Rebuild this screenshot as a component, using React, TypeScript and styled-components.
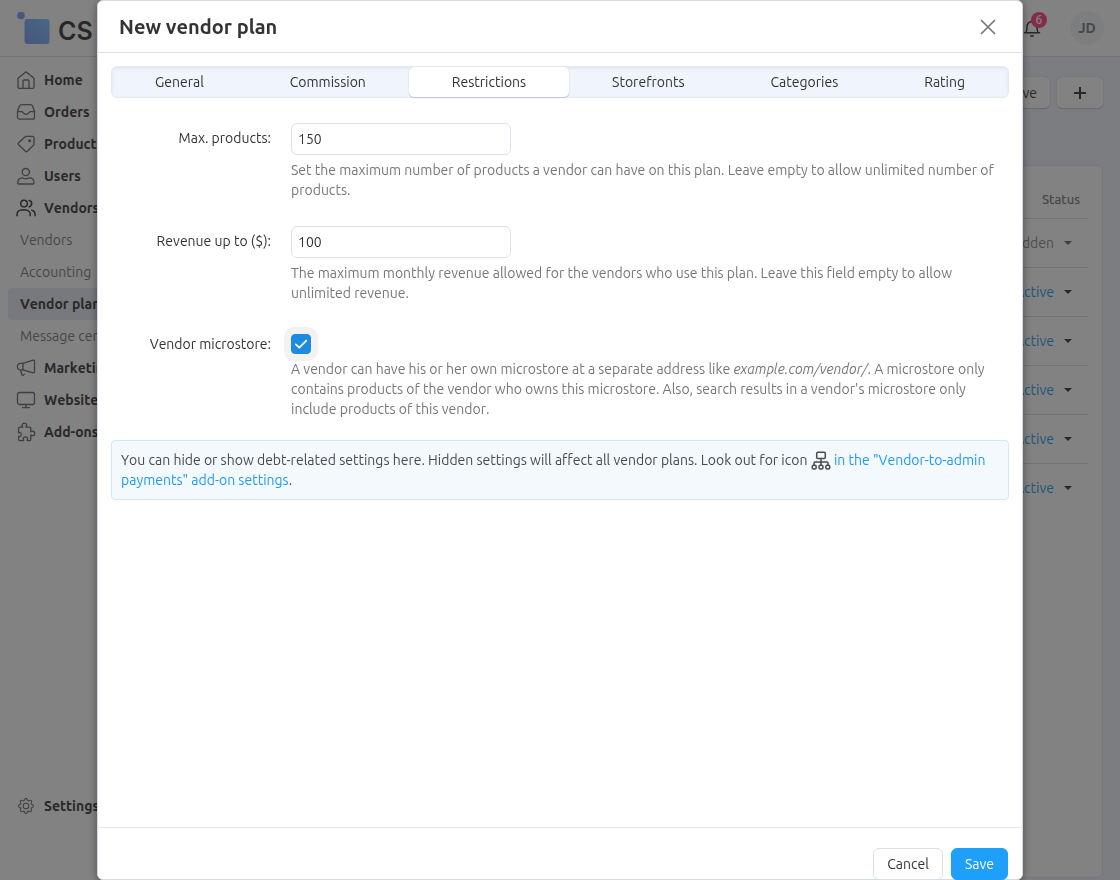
import React, { useState } from 'react';
import styled, { createGlobalStyle, css } from 'styled-components';
import { BsGear } from 'react-icons/bs';

const GlobalStyle = createGlobalStyle`
  *, *::before, *::after { box-sizing: border-box; }
  body {
    margin: 0;
    background: #f0f4fb;
    color: #333;
    font-family: Ubuntu, "Noto Sans", sans-serif;
    font-size: 14px;
    font-kerning: none;
    line-height: 20px;
  }
  button, input { font: inherit; font-kerning: inherit; color: inherit; }
`;

const Page = styled.div`
  display: flex;
  flex-direction: column;
  height: 100vh;
  overflow: hidden;
`;

const TopBar = styled.header`
  display: flex;
  align-items: center;
  justify-content: space-between;
  height: 57px;
  flex: none;
  padding: 0 16px;
  background: #fff;
  border-bottom: 1px solid #dde2ea;
`;

const Brand = styled.a`
  display: flex;
  align-items: flex-end;
  gap: 8px;
  color: #333;
  font: 600 25px/28px Inter, sans-serif;
  text-decoration: none;
`;

const TopActions = styled.div`
  display: flex;
  align-items: center;
  gap: 28px;
`;

const BellButton = styled.button`
  position: relative;
  display: flex;
  padding: 0;
  border: 0;
  background: none;
  color: #333;
`;

const Badge = styled.span`
  position: absolute;
  top: -6px;
  right: -5px;
  width: 16px;
  height: 16px;
  border-radius: 8px;
  background: #ff3d7f;
  color: #fff;
  font-size: 12px;
  font-weight: 500;
  line-height: 16px;
  text-align: center;
`;

const Avatar = styled.button`
  width: 34px;
  height: 34px;
  padding: 0;
  border: 0;
  border-radius: 50%;
  background: #f3f5f9;
  color: #777b82;
  font-weight: 600;
`;

const Workspace = styled.div`
  display: flex;
  flex: 1;
  min-height: 0;
`;

const Sidebar = styled.nav`
  display: flex;
  flex-direction: column;
  justify-content: space-between;
  width: 200px;
  padding: 7px 8px 58px;
  background: #fff;
`;

const NavList = styled.ul`
  margin: 0;
  padding: 0;
  list-style: none;
`;

const NavLink = styled.a<{ $dark?: boolean }>`
  display: flex;
  align-items: center;
  gap: 8px;
  height: 32px;
  padding: 0 8px;
  color: #333;
  font-weight: 700;
  text-decoration: none;
  svg { flex: none; color: ${(p) => (p.$dark ? '#333' : '#666')}; }
`;

const SubLink = styled.a<{ $active?: boolean }>`
  display: flex;
  align-items: center;
  height: 32px;
  padding: 0 12px;
  border-radius: 4px;
  color: #777;
  text-decoration: none;
  ${(p) =>
    p.$active &&
    css`
      background: #e6ebf5;
      color: #333;
      font-weight: 700;
    `}
`;

const Main = styled.main`
  display: flex;
  flex: 1;
  flex-direction: column;
  gap: 57px;
  padding: 20px 17px 2px;
`;

const ActionBar = styled.div`
  display: flex;
  justify-content: flex-end;
  gap: 7px;
`;

const PageButton = styled.button`
  display: flex;
  align-items: center;
  justify-content: center;
  min-width: 46px;
  height: 31px;
  padding: 0 13px;
  border: 0;
  border-radius: 5px;
  background: #fff;
  box-shadow: 0 0 1px #a5adba, 0 1px 1px #c0c7d2;
`;

const Card = styled.section`
  flex: 1;
  padding: 14px 14px 0;
  border: 1px solid #e4e8ef;
  border-radius: 6px;
  background: #fff;
`;

const PlanTable = styled.table`
  width: 100%;
  border-collapse: collapse;
`;

const HeadCell = styled.th`
  height: 38px;
  padding: 0 8px 0 0;
  border-bottom: 1px solid #dce0e5;
  color: #777;
  font-size: 13px;
  font-weight: 500;
  text-align: right;
`;

const StatusCell = styled.td`
  height: 49px;
  padding: 0 16px 0 0;
  border-bottom: 1px solid #dce0e5;
  text-align: right;
  tr:last-child & { border-bottom: 0; }
`;

const StatusButton = styled.button<{ $muted?: boolean }>`
  display: inline-flex;
  align-items: center;
  gap: 10px;
  padding: 0;
  border: 0;
  background: none;
  color: ${(p) => (p.$muted ? '#888' : '#1d9bee')};
  &::after {
    content: '';
    border: 4px solid transparent;
    border-top-color: ${(p) => (p.$muted ? '#666' : '#333')};
    border-bottom: 0;
  }
`;

const Backdrop = styled.div`
  position: fixed;
  inset: 0;
  display: flex;
  justify-content: center;
  background: rgba(32, 32, 32, 0.56);
`;

const Dialog = styled.div`
  display: flex;
  flex-direction: column;
  width: 926px;
  max-width: 100%;
  border: 1px solid #d5dae5;
  border-radius: 6px;
  background: #fff;
  box-shadow: 0 2px 8px rgba(0, 0, 0, 0.4);
`;

const DialogHeader = styled.header`
  display: flex;
  align-items: center;
  justify-content: space-between;
  height: 52px;
  flex: none;
  padding: 0 24px 0 21px;
  border-bottom: 1px solid #dddfea;
`;

const DialogTitle = styled.h1`
  margin: 0;
  font-size: 20px;
  font-weight: 700;
  line-height: 28px;
`;

const CloseButton = styled.button`
  display: flex;
  padding: 0;
  border: 0;
  background: none;
  color: #777;
`;

const DialogBody = styled.div`
  display: flex;
  flex: 1;
  flex-direction: column;
  min-height: 0;
  padding: 13px;
  overflow: auto;
`;

const TabList = styled.div`
  display: flex;
  flex: none;
  height: 32px;
  border: 1px solid #e8ebf1;
  border-radius: 6px;
  background: #f0f4fc;
  box-shadow: inset 0 1px 3px rgba(60, 70, 100, 0.1);
`;

const Tab = styled.button<{ $selected: boolean }>`
  flex: 1 1 auto;
  padding: 0;
  border: 0;
  border-radius: 5px;
  background: ${(p) => (p.$selected ? '#fff' : 'transparent')};
  box-shadow: ${(p) => (p.$selected ? '0 0 1px #b9c1d4, 0 1px 1px #bcc5da' : 'none')};
`;

const Form = styled.form`
  display: flex;
  flex-direction: column;
  gap: 26px;
  margin: 25px 0 21px;
`;

const Field = styled.div`
  display: grid;
  grid-template-columns: 160px 1fr;
  column-gap: 20px;
`;

const Label = styled.label`
  line-height: 30px;
  text-align: right;
`;

const TextInput = styled.input`
  display: block;
  width: 220px;
  max-width: 100%;
  height: 32px;
  padding: 0 6px;
  border: 1px solid #dde1ea;
  border-radius: 6px;
  background: #fff;
`;

const CheckBox = styled.input`
  appearance: none;
  display: block;
  width: 20px;
  height: 20px;
  margin: 0;
  border: 1px solid #c4cbd8;
  border-radius: 4px;
  background: #fff;
  box-shadow: 0 0 0 7px #f2f2f2;
  &:checked {
    border-color: #1b8ce0;
    background: #1b8ce0;
  }
`;

const CheckWrap = styled.span`
  position: relative;
  display: block;
  width: 20px;
  margin-top: 5px;
  svg {
    position: absolute;
    top: 0;
    left: 0;
    pointer-events: none;
  }
`;

const Help = styled.p`
  margin: 5px 0 0;
  color: #777;
`;

const Notice = styled.p`
  margin: 0;
  padding: 9px;
  border: 1px solid #cfe9f8;
  border-radius: 4px;
  background: #f4f9fe;
  color: #4a4a4a;
  svg { margin: -4px 0; vertical-align: middle; }
`;

const NoticeLink = styled.a`
  color: #1d9bee;
  text-decoration: none;
`;

const DialogFooter = styled.footer`
  display: flex;
  justify-content: flex-end;
  gap: 8px;
  flex: none;
  margin-bottom: -1px;
  padding: 20px 14px 0;
  border-top: 1px solid #e6e7ea;
`;

const DialogButton = styled.button<{ $primary?: boolean }>`
  height: 32px;
  padding: 0 13px;
  border: 1px solid ${(p) => (p.$primary ? '#1d9ffa' : '#dadfe8')};
  border-radius: 6px;
  background: ${(p) => (p.$primary ? '#1d9ffa' : '#fff')};
  color: ${(p) => (p.$primary ? '#fff' : '#333')};
`;

const Glyph = ({ children }: { children: React.ReactNode }) => (
  <svg width="20" height="20" viewBox="0 0 20 20" fill="none" stroke="currentColor" strokeWidth="1.3" strokeLinecap="round" strokeLinejoin="round" aria-hidden="true">
    {children}
  </svg>
);

const HomeIcon = () => (
  <Glyph>
    <path d="M2 8.300 10 1.800l8 6.500v8.600a1.500 1.500 0 0 1-1.500 1.500h-13A1.500 1.500 0 0 1 2 16.900z" />
    <path d="M7 18.200V11a1 1 0 0 1 1-1h4a1 1 0 0 1 1 1v7.200" />
  </Glyph>
);
const OrdersIcon = () => (
  <Glyph>
    <path d="M5.3 2.7h9.4c.8 0 1.5.5 1.8 1.2l2 5.4v5.9a2 2 0 0 1-2 2h-13a2 2 0 0 1-2-2V9.3l2-5.4c.3-.7 1-1.2 1.8-1.2z" />
    <path d="M1.6 9.7h4.1c1.3 0 1.4 2.7 4.3 2.7s3-2.7 4.3-2.7h4.1" />
  </Glyph>
);
const TagIcon = () => (
  <Glyph>
    <path d="M10.3 2.4h6.3c.8 0 1.4.6 1.4 1.4v6.1c0 .5-.2 1-.6 1.3l-6 6c-.6.6-1.4.6-2 0l-6.8-6.4c-.6-.6-.6-1.4 0-2l6.6-6c.3-.3.7-.4 1.1-.4z" />
    <circle cx="13.7" cy="6.7" r=".9" fill="currentColor" />
  </Glyph>
);
const UserIcon = () => (
  <Glyph>
    <circle cx="9.8" cy="6.1" r="3.6" />
    <path d="M6.2 11.8c-2.8 0-4.5 2.2-4.5 5 0 .7.5 1.2 1.2 1.2h13.9c.7 0 1.2-.5 1.2-1.2 0-2.8-1.7-5-4.5-5-1.2 0-1.7 1-3.7 1s-2.4-1-3.6-1z" />
  </Glyph>
);
const VendorsIcon = () => (
  <Glyph>
    <g strokeWidth="1.5">
      <circle cx="8" cy="5.6" r="3.3" />
      <path d="M1 17.7v-1.2A4.5 4.5 0 0 1 5.5 12h4.2a4.5 4.5 0 0 1 4.5 4.5v1.2" />
      <path d="M13.2 2.4a3.3 3.3 0 0 1 0 6.4M15.8 12.2c2.2.5 3.3 2 3.3 4.3v1.2" />
    </g>
  </Glyph>
);
const MarketingIcon = () => (
  <Glyph>
    <path d="M7 5.4 17 2.2c.8-.2 1.5.2 1.5 1v10.6c0 .8-.7 1.2-1.5 1L7 11.800z" />
    <path d="M7 5.4H4.2a2.800 2.800 0 0 0-2.700 3.200 2.800 2.800 0 0 0 2.700 3.200H7M4.400 11.800l1.400 4.700c.3.9 1.400 1 1.900.4l.5-.8" />
  </Glyph>
);
const WebsiteIcon = () => (
  <Glyph>
    <rect x="1.5" y="2.5" width="17" height="12" rx="2" />
    <path d="M10 14.5v3M6.5 17.6h7" />
  </Glyph>
);
const AddonsIcon = () => (
  <Glyph>
    <path d="M2.6 6.2c0-.6.4-1 1-1h3.200c-.5-.6-.8-1.100-.8-1.700a2.300 2.300 0 0 1 4.600 0c0 .6-.3 1.100-.8 1.700h4c.6 0 1 .4 1 1v3.600c.5-.4 1-.6 1.700-.6a2.200 2.200 0 0 1 0 4.400c-.7 0-1.200-.2-1.700-.6V17.600c0 .6-.4 1-1 1h-2.700c.3-.5.500-1 .5-1.500a2.200 2.200 0 0 0-4.400 0c0 .5.200 1 .5 1.500H3.600c-.6 0-1-.4-1-1v-3.300c.4.300.7.4 1 .4a2.200 2.200 0 0 0 0-4.300c-.3 0-.6.100-1 .4z" />
  </Glyph>
);
const GearSlot = styled.span`
  display: flex;
  justify-content: center;
  width: 20px;
`;
const GearIcon = () => (
  <GearSlot>
    <BsGear size={16} />
  </GearSlot>
);
const LogoMark = () => (
  <svg width="34" height="34" viewBox="0 0 34 34" aria-hidden="true">
    <defs>
      <linearGradient id="mark" x1="1" y1="0" x2="0" y2="1">
        <stop offset="0" stopColor="#7cc4ff" />
        <stop offset="1" stopColor="#7f95fa" />
      </linearGradient>
    </defs>
    <circle cx="5" cy="4.500" r="3.800" fill="#7f9dfb" />
    <rect x="8.500" y="8" width="25" height="25" rx="3" fill="url(#mark)" />
  </svg>
);
const BellIcon = () => (
  <Glyph>
    <g strokeWidth="1.5">
      <path d="M2.5 14.7h15M4 14.5c1-2 1-3.6 1-6a5 5 0 0 1 10 0c0 2.4 0 4 1 6" />
      <path d="M8.7 17.6c.7.9 1.9.9 2.6 0" />
    </g>
  </Glyph>
);
const SitemapIcon = () => (
  <svg width="20" height="20" viewBox="0 0 20 20" fill="none" stroke="currentColor" strokeWidth="1.5" strokeLinejoin="round" role="img" aria-label="Debt settings">
    <rect x="5.7" y="1.2" width="8.6" height="6.2" rx="1.2" />
    <path d="M10 7.5V14M3 14v-1.9c0-.7.5-1.2 1.2-1.2h11.6c.7 0 1.200.5 1.200 1.200V14" />
    <rect x="1.2" y="14.3" width="4" height="3.8" rx="1.5" />
    <rect x="8" y="14.3" width="4" height="3.8" rx="1.5" />
    <rect x="14.8" y="14.3" width="4" height="3.8" rx="1.5" />
  </svg>
);

const tabs = ['General', 'Commission', 'Restrictions', 'Storefronts', 'Categories', 'Rating'];
const vendorLinks = ['Vendors', 'Accounting', 'Vendor plans', 'Message center'];
const statuses = ['Hidden', 'Active', 'Active', 'Active', 'Active', 'Active'];

export default function App() {
  const [tab, setTab] = useState('Restrictions');
  const [microstore, setMicrostore] = useState(true);

  const navItem = (label: string, Icon: React.ComponentType, dark = false) => (
    <li>
      <NavLink href="#" $dark={dark}>
        <Icon />
        {label}
      </NavLink>
    </li>
  );

  return (
    <>
      <GlobalStyle />
      <Page>
        <TopBar>
          <Brand href="#">
            <LogoMark />
            CS
          </Brand>
          <TopActions>
            <BellButton type="button" aria-label="Notifications">
              <BellIcon />
              <Badge>6</Badge>
            </BellButton>
            <Avatar type="button">JD</Avatar>
          </TopActions>
        </TopBar>
        <Workspace>
          <Sidebar>
            <NavList>
              {navItem('Home', HomeIcon)}
              {navItem('Orders', OrdersIcon)}
              {navItem('Products', TagIcon)}
              {navItem('Users', UserIcon)}
              {navItem('Vendors', VendorsIcon, true)}
              {vendorLinks.map((label) => (
                <li key={label}>
                  <SubLink href="#" $active={label === 'Vendor plans'}>{label}</SubLink>
                </li>
              ))}
              {navItem('Marketing', MarketingIcon)}
              {navItem('Website', WebsiteIcon)}
              {navItem('Add-ons', AddonsIcon)}
            </NavList>
            <NavList>{navItem('Settings', GearIcon)}</NavList>
          </Sidebar>
          <Main>
            <ActionBar>
              <PageButton type="button">Save</PageButton>
              <PageButton type="button" aria-label="Add plan">
                <svg width="14" height="14" viewBox="0 0 14 14" stroke="currentColor" strokeWidth="2" aria-hidden="true">
                  <path d="M7 1v12M1 7h12" />
                </svg>
              </PageButton>
            </ActionBar>
            <Card>
              <PlanTable>
                <thead>
                  <tr><HeadCell scope="col">Status</HeadCell></tr>
                </thead>
                <tbody>
                  {statuses.map((status, i) => (
                    <tr key={i}>
                      <StatusCell>
                        <StatusButton type="button" $muted={status === 'Hidden'}>{status}</StatusButton>
                      </StatusCell>
                    </tr>
                  ))}
                </tbody>
              </PlanTable>
            </Card>
          </Main>
        </Workspace>
      </Page>

      <Backdrop>
        <Dialog role="dialog" aria-modal="true" aria-labelledby="dialog-title">
          <DialogHeader>
            <DialogTitle id="dialog-title">New vendor plan</DialogTitle>
            <CloseButton type="button" aria-label="Close">
              <svg width="20" height="20" viewBox="0 0 20 20" stroke="currentColor" strokeWidth="1.7" strokeLinecap="round" aria-hidden="true">
                <path d="m3.500 3.500 13 13M16.500 3.500l-13 13" />
              </svg>
            </CloseButton>
          </DialogHeader>
          <DialogBody>
            <TabList role="tablist">
              {tabs.map((name) => (
                <Tab key={name} type="button" role="tab" aria-selected={name === tab} $selected={name === tab} onClick={() => setTab(name)}>
                  {name}
                </Tab>
              ))}
            </TabList>
            <Form id="plan-form" onSubmit={(e) => e.preventDefault()}>
              <Field>
                <Label htmlFor="max-products">Max. products:</Label>
                <div>
                  <TextInput id="max-products" type="text" defaultValue="150" />
                  <Help>
                    Set the maximum number of products a vendor can have on this plan. Leave empty to allow unlimited number of products.
                  </Help>
                </div>
              </Field>
              <Field>
                <Label htmlFor="revenue">Revenue up to ($):</Label>
                <div>
                  <TextInput id="revenue" type="text" defaultValue="100" />
                  <Help>
                    The maximum monthly revenue allowed for the vendors who use this plan. Leave this field empty to allow unlimited revenue.
                  </Help>
                </div>
              </Field>
              <Field>
                <Label htmlFor="microstore">Vendor microstore:</Label>
                <div>
                  <CheckWrap>
                    <CheckBox id="microstore" type="checkbox" checked={microstore} onChange={(e) => setMicrostore(e.target.checked)} />
                    {microstore && (
                      <svg width="20" height="20" viewBox="0 0 20 20" fill="none" stroke="#fff" strokeWidth="1.7" strokeLinecap="round" strokeLinejoin="round" aria-hidden="true">
                        <path d="m4.800 10.300 3.500 3.400 7-7" />
                      </svg>
                    )}
                  </CheckWrap>
                  <Help>
                    A vendor can have his or her own microstore at a separate address like <em>example.com/vendor/</em>. A microstore only contains products of the vendor who owns this microstore. Also, search results in a vendor's microstore only include products of this vendor.
                  </Help>
                </div>
              </Field>
            </Form>
            <Notice>
              You can hide or show debt-related settings here. Hidden settings will affect all vendor plans. Look out for icon <SitemapIcon />{' '}
              <NoticeLink href="#">in the "Vendor-to-admin payments" add-on settings</NoticeLink>.
            </Notice>
          </DialogBody>
          <DialogFooter>
            <DialogButton type="button">Cancel</DialogButton>
            <DialogButton type="submit" form="plan-form" $primary>Save</DialogButton>
          </DialogFooter>
        </Dialog>
      </Backdrop>
    </>
  );
}
